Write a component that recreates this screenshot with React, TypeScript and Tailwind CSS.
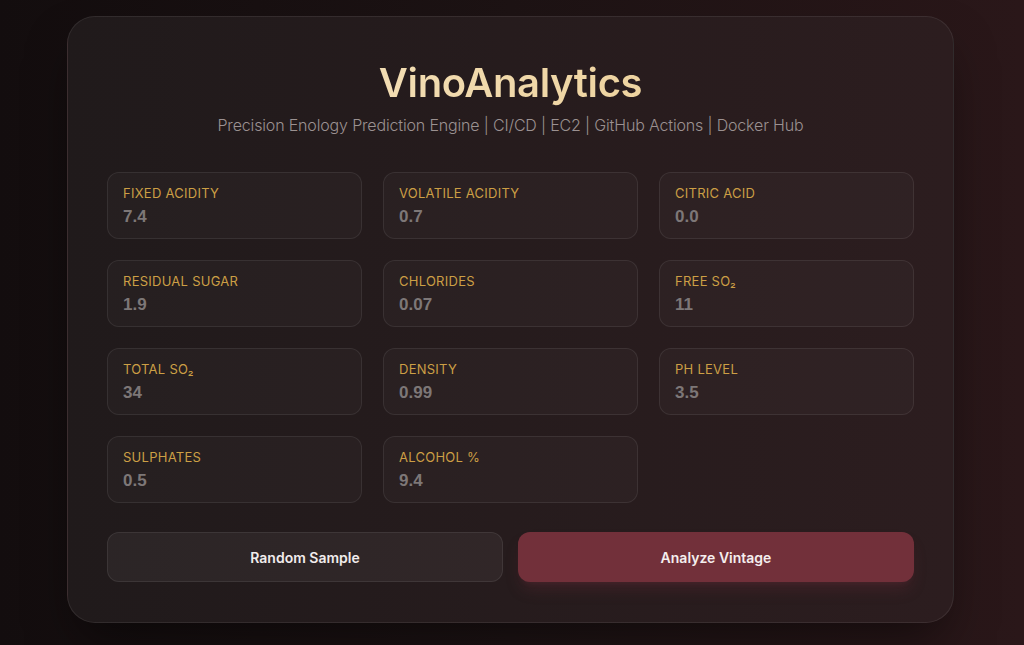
import React from "react";

const fields = [
  { label: "Fixed Acidity", value: "7.4" },
  { label: "Volatile Acidity", value: "0.7" },
  { label: "Citric Acid", value: "0.0" },
  { label: "Residual Sugar", value: "1.9" },
  { label: "Chlorides", value: "0.07" },
  { label: "Free SO₂", value: "11" },
  { label: "Total SO₂", value: "34" },
  { label: "Density", value: "0.99" },
  { label: "pH Level", value: "3.5" },
  { label: "Sulphates", value: "0.5" },
  { label: "Alcohol %", value: "9.4" },
];

function Field({ label, value }: { label: string; value: string }) {
  return (
    <div className="h-[67px] rounded-xl border border-white/[0.08] bg-white/[0.025] pl-[15px] pt-[11px]">
      <div className="text-[13px] leading-[18px] uppercase tracking-[0.02em] text-[#cc9f45] font-['Inter',sans-serif]">
        {label}
      </div>
      <input
        readOnly
        value={value}
        className="mt-[4px] block w-full bg-transparent text-[17px] leading-[22px] font-bold text-[#7d7777] outline-none font-['Liberation_Sans',sans-serif]"
      />
    </div>
  );
}

export default function App() {
  return (
    <div className="min-h-[645px] w-full bg-gradient-to-r from-[#130d0e] via-[#1d1314] to-[#2a1719] pt-4 font-['Inter',sans-serif]">
      <div className="ml-[67px] w-[887px] rounded-[28px] border border-white/[0.08] bg-gradient-to-r from-[#201a1b] to-[#2c1d1f] px-[39px] pb-10 pt-[40px] shadow-2xl shadow-black/50">
        <h1 className="text-center text-[40px] font-semibold leading-[52px] tracking-[-0.01em] bg-gradient-to-r from-[#f7e7c6] to-[#e9c98c] bg-clip-text text-transparent">
          VinoAnalytics
        </h1>
        <p className="mt-[4px] text-center text-[16px] font-light text-[#9b9191] tracking-[-0.01em]">
          Precision Enology Prediction Engine | CI/CD | EC2 | GitHub Actions | Docker Hub
        </p>

        <div className="mt-[35px] grid grid-cols-3 gap-x-[21px] gap-y-[21px]">
          {fields.map((f) => (
            <Field key={f.label} label={f.label} value={f.value} />
          ))}
        </div>

        <div className="mt-[29px] grid grid-cols-2 gap-[15px]">
          <button className="h-[50px] rounded-xl border border-white/[0.08] bg-white/[0.05] text-[14px] font-semibold text-[#f1ecec]">
            Random Sample
          </button>
          <button className="h-[50px] rounded-xl bg-[#72303a] text-[14px] font-semibold text-[#f5eeee] shadow-lg shadow-[#72303a]/30">
            Analyze Vintage
          </button>
        </div>
      </div>
    </div>
  );
}
